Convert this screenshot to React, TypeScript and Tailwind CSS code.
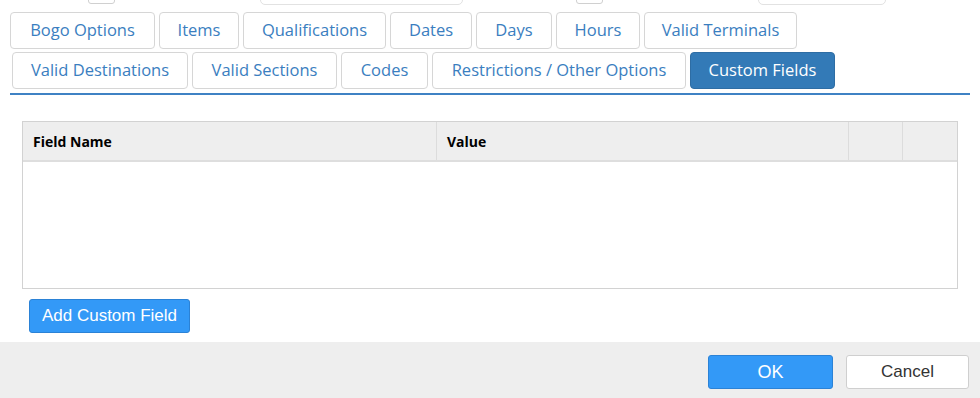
import React from "react";

const row1 = [
  { t: "Bogo Options", w: 145 },
  { t: "Items", w: 80 },
  { t: "Qualifications", w: 143 },
  { t: "Dates", w: 82 },
  { t: "Days", w: 76 },
  { t: "Hours", w: 84 },
  { t: "Valid Terminals", w: 153 },
];

const row2 = [
  { t: "Valid Destinations", w: 176 },
  { t: "Valid Sections", w: 145 },
  { t: "Codes", w: 87 },
  { t: "Restrictions / Other Options", w: 254 },
  { t: "Custom Fields", w: 145, active: true },
];

function Tab({ t, w, active }: { t: string; w: number; active?: boolean }) {
  return (
    <div
      style={{ width: w }}
      className={
        "flex items-center justify-center rounded-[4px] border text-[16.5px] leading-none whitespace-nowrap " +
        (active
          ? "bg-[#337ab7] border-[#2e6da4] text-white"
          : "bg-white border-[#d6d6d6] text-[#3a7ec0]")
      }
    >
      {t}
    </div>
  );
}

export default function App() {
  return (
    <div
      className="h-[398px] w-[980px] flex flex-col bg-white overflow-hidden"
      style={{ fontFamily: '"Open Sans", "Noto Sans", sans-serif' }}
    >
      <div className="flex-1 flex flex-col">
        {/* cut-off top fields */}
        <div className="h-[6px] overflow-hidden flex items-end">
          <div className="ml-[88px] w-[27px] h-[30px] mb-[2px] border border-[#d0d0d0] rounded-[3px]" />
          <div className="ml-[145px] w-[203px] h-[30px] mb-[1px] border border-[#e2e2e2] rounded-[5px]" />
          <div className="ml-[113px] w-[27px] h-[30px] mb-[2px] border border-[#d0d0d0] rounded-[3px]" />
          <div className="ml-[155px] w-[128px] h-[30px] mb-[1px] border border-[#e2e2e2] rounded-[5px]" />
        </div>
        {/* tabs */}
        <div className="pt-[6px] flex flex-col gap-[3px]">
          <div className="flex gap-[4px] pl-[10px] h-[37px]">
            {row1.map((r) => (
              <Tab key={r.t} {...r} />
            ))}
          </div>
          <div className="flex gap-[4px] pl-[12px] h-[37px]">
            {row2.map((r) => (
              <Tab key={r.t} {...r} />
            ))}
          </div>
        </div>
        <div className="mt-[4px] ml-[10px] w-[960px] h-[2px] bg-[#3f82c4]" />
        {/* table */}
        <div className="mt-[26px] ml-[22px] w-[936px] h-[168px] border border-[#d2d2d2] flex flex-col">
          <div className="grid grid-cols-[414px_412px_54px_54px] h-[40px] bg-[#eeeeee] border-b-2 border-[#dedede] text-[14px] font-bold text-black">
            <div className="flex items-center pl-[10px] border-r border-[#dcdcdc]">Field Name</div>
            <div className="flex items-center pl-[10px] border-r border-[#dcdcdc]">Value</div>
            <div className="border-r border-[#dcdcdc]" />
            <div />
          </div>
          <div className="flex-1 bg-white" />
        </div>
        <div className="mt-[10px] ml-[29px]">
          <button
            className="w-[161px] h-[34px] rounded-[3px] bg-[#3399f7] border border-[#2b82d6] text-white text-[17px]"
            style={{ fontFamily: '"Liberation Sans", Arial, sans-serif' }}
          >
            Add Custom Field
          </button>
        </div>
      </div>
      <div
        className="h-[56px] bg-[#eeeeee] flex justify-end items-start pt-[13px] pr-[11px] gap-[13px]"
        style={{ fontFamily: '"Liberation Sans", Arial, sans-serif' }}
      >
        <button className="w-[125px] h-[34px] rounded-[3px] bg-[#3399f7] border border-[#2b82d6] text-white text-[18px]">
          OK
        </button>
        <button className="w-[123px] h-[34px] rounded-[3px] bg-white border border-[#cfcfcf] text-[#333333] text-[17px]">
          Cancel
        </button>
      </div>
    </div>
  );
}
